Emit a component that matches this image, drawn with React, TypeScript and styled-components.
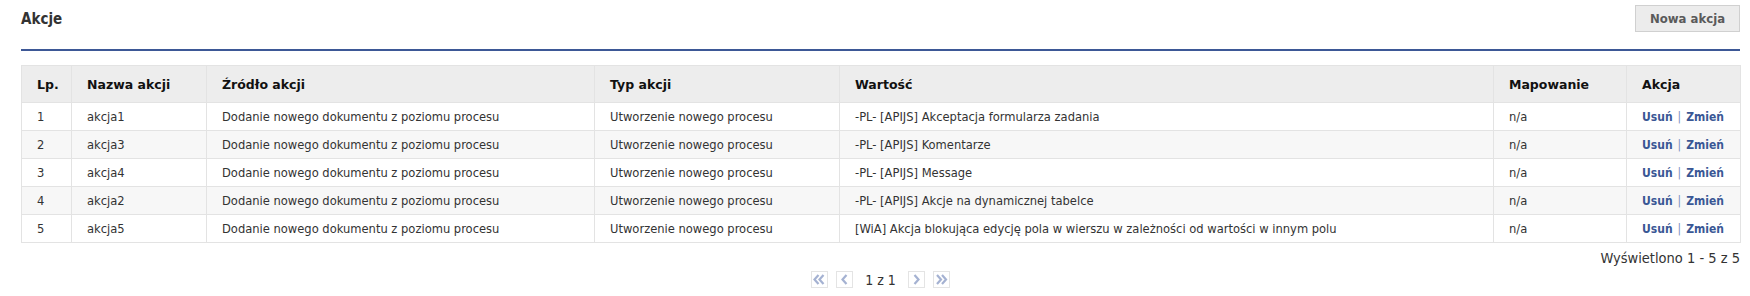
import React from "react";
import styled, { createGlobalStyle } from "styled-components";

const GlobalStyle = createGlobalStyle`
  html, body { margin: 0; padding: 0; background: #fff; }
  body { font-family: "DejaVu Sans Condensed", "DejaVu Sans", sans-serif; color: #333; }
`;

const Page = styled.div`
  padding: 5px 10px 0 21px;
  font-family: "DejaVu Sans Condensed", "DejaVu Sans", sans-serif;
`;

const TopBar = styled.div`
  display: flex;
  justify-content: space-between;
  align-items: center;
  height: 27px;
`;

const Title = styled.h1`
  margin: 0;
  font-size: 15px;
  font-weight: bold;
  color: #333;
`;

const Button = styled.button`
  height: 27px;
  width: 105px;
  padding: 0;
  background: #ececec;
  border: 1px solid #d0d0d0;
  color: #5a5a5a;
  font-family: inherit;
  font-size: 13px;
  font-weight: bold;
`;

const Rule = styled.hr`
  margin: 17px 0 14px;
  border: 0;
  height: 2px;
  background: #3d5896;
`;

const Table = styled.table`
  width: 100%;
  border-collapse: collapse;
  border: 1px solid #e3e3e3;
  font-size: 12.8px;
  table-layout: fixed;
`;

const Th = styled.th`
  height: 36px;
  padding: 0 0 0 15px;
  text-align: left;
  font-family: "DejaVu Sans", sans-serif;
  font-size: 12.5px;
  font-weight: bold;
  color: #111;
  background: #ededed;
  border: 1px solid #e3e3e3;
`;

const Tr = styled.tr<{ $alt: boolean }>`
  background: ${(p) => (p.$alt ? "#f7f7f7" : "#fff")};
`;

const Td = styled.td`
  height: 27px;
  padding: 0 0 0 15px;
  color: #333;
  border: 1px solid #e3e3e3;
  white-space: nowrap;
`;

const Link = styled.a`
  color: #3a5795;
  font-size: 12px;
  font-weight: bold;
  text-decoration: none;
`;

const Sep = styled.span`
  color: #7a8fbf;
  font-size: 12px;
  margin: 0 5px;
`;

const Summary = styled.div`
  text-align: right;
  font-size: 14.5px;
  color: #333;
  margin-top: 7px;
  line-height: 17px;
`;

const Pager = styled.div`
  display: flex;
  justify-content: center;
  align-items: center;
  gap: 8px;
  margin-top: 4px;
`;

const PageBtn = styled.span`
  display: inline-flex;
  align-items: center;
  justify-content: center;
  width: 15px;
  height: 15px;
  border: 1px solid #e4e4e4;
  background: #fff;
`;

const PageText = styled.span`
  font-size: 14px;
  color: #333;
  margin: 0 4px;
`;

const Chevron = ({ dir, double }: { dir: "l" | "r"; double?: boolean }) => {
  const one = (x: number) =>
    dir === "l"
      ? `M${x + 4} 3 L${x} 7.5 L${x + 4} 12`
      : `M${x} 3 L${x + 4} 7.5 L${x} 12`;
  return (
    <svg width="15" height="15" viewBox="0 0 15 15">
      {double ? (
        <>
          <path d={one(dir === "l" ? 2.5 : 3)} stroke="#a5b2d2" strokeWidth="2.2" fill="none" />
          <path d={one(dir === "l" ? 7.5 : 8)} stroke="#a5b2d2" strokeWidth="2.2" fill="none" />
        </>
      ) : (
        <path d={one(5.5)} stroke="#a5b2d2" strokeWidth="2.2" fill="none" />
      )}
    </svg>
  );
};

const rows = [
  { n: 1, name: "akcja1", val: "-PL- [APIJS] Akceptacja formularza zadania" },
  { n: 2, name: "akcja3", val: "-PL- [APIJS] Komentarze" },
  { n: 3, name: "akcja4", val: "-PL- [APIJS] Message" },
  { n: 4, name: "akcja2", val: "-PL- [APIJS] Akcje na dynamicznej tabelce" },
  { n: 5, name: "akcja5", val: "[WiA] Akcja blokująca edycję pola w wierszu w zależności od wartości w innym polu" },
];

const widths = [50, 135, 388, 245, 654, 133, 114];

export default function App() {
  return (
    <>
      <GlobalStyle />
      <Page>
        <TopBar>
          <Title>Akcje</Title>
          <Button>Nowa akcja</Button>
        </TopBar>
        <Rule />
        <Table>
          <colgroup>
            {widths.map((w, i) => (
              <col key={i} style={{ width: w }} />
            ))}
          </colgroup>
          <thead>
            <tr>
              <Th>Lp.</Th>
              <Th>Nazwa akcji</Th>
              <Th>Źródło akcji</Th>
              <Th>Typ akcji</Th>
              <Th>Wartość</Th>
              <Th>Mapowanie</Th>
              <Th>Akcja</Th>
            </tr>
          </thead>
          <tbody>
            {rows.map((r, i) => (
              <Tr key={r.n} $alt={i % 2 === 1}>
                <Td>{r.n}</Td>
                <Td>{r.name}</Td>
                <Td>Dodanie nowego dokumentu z poziomu procesu</Td>
                <Td>Utworzenie nowego procesu</Td>
                <Td>{r.val}</Td>
                <Td>n/a</Td>
                <Td>
                  <Link href="#">Usuń</Link>
                  <Sep>|</Sep>
                  <Link href="#">Zmień</Link>
                </Td>
              </Tr>
            ))}
          </tbody>
        </Table>
        <Summary>Wyświetlono 1 - 5 z 5</Summary>
        <Pager>
          <PageBtn><Chevron dir="l" double /></PageBtn>
          <PageBtn><Chevron dir="l" /></PageBtn>
          <PageText>1 z 1</PageText>
          <PageBtn><Chevron dir="r" /></PageBtn>
          <PageBtn><Chevron dir="r" double /></PageBtn>
        </Pager>
      </Page>
    </>
  );
}
